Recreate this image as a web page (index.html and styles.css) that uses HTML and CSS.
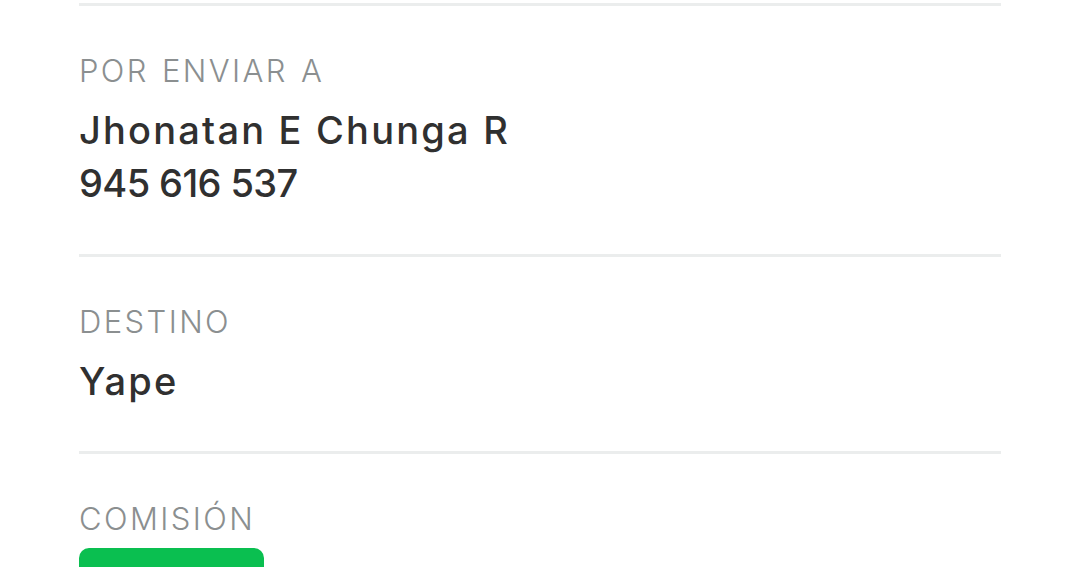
FILE: index.html
```html
<!DOCTYPE html>
<html lang="es">
    <head>
        <meta charset="utf-8">
        <link rel="stylesheet" href="styles.css">
    </head>
    <body>
        <div class="detail">
            <div class="row">
                <div class="label">POR ENVIAR A</div>
                <div class="value name">Jhonatan E Chunga R</div>
                <div class="value phone">945 616 537</div>
            </div>
            <div class="row">
                <div class="label">DESTINO</div>
                <div class="value name">Yape</div>
            </div>
            <div class="row">
                <div class="label">COMISIÓN</div>
                <div class="badge"></div>
            </div>
        </div>
    </body>
</html>
```

FILE: styles.css
```css
            * {
                box-sizing: border-box;
            }

            body {
                background-color: #ffffff;
                padding: 0px;
                margin: 0px;
                font-family: Inter, "Noto Sans", sans-serif;
            }

            .detail {
                display: flex;
                flex-direction: column;
                padding: 3px 79px 0 79px;
            }

            .row {
                border-top: 3px solid #ebeded;
                padding: 48px 0 44px 0;
            }

            .label {
                color: #8b8f90;
                font-size: 31px;
                line-height: 34px;
                font-weight: 300;
                letter-spacing: 2.4px;
                word-spacing: 2px;
            }

            .value {
                color: #303030;
                font-size: 38px;
                line-height: 53px;
                font-weight: 500;
            }

            .name {
                letter-spacing: 2.2px;
            }

            .phone {
                letter-spacing: -0.6px;
            }

            .label + .value {
                margin-top: 16px;
            }

            .label + .name:last-child {
                margin-bottom: -1px;
            }

            .badge {
                margin-top: 12px;
                width: 185px;
                height: 40px;
                border-radius: 10px;
                background-color: #0abf50;
            }
```
